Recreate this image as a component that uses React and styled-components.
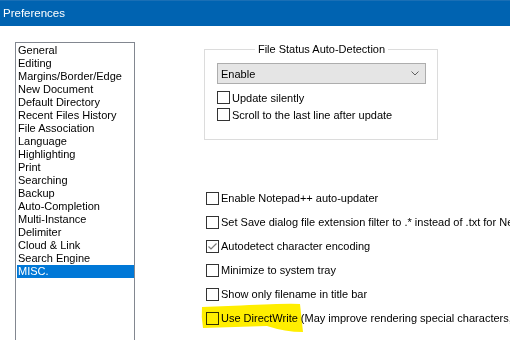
import React from "react";
import styled, { createGlobalStyle } from "styled-components";

const GlobalStyle = createGlobalStyle`
  html, body {
    margin: 0;
    padding: 0;
    background: #ffffff;
  }
  body {
    width: 510px;
    height: 340px;
    overflow: hidden;
    font-family: "Liberation Sans", Arial, sans-serif;
    font-size: 11px;
    color: #000000;
  }
`;

const pages = [
  "General",
  "Editing",
  "Margins/Border/Edge",
  "New Document",
  "Default Directory",
  "Recent Files History",
  "File Association",
  "Language",
  "Highlighting",
  "Print",
  "Searching",
  "Backup",
  "Auto-Completion",
  "Multi-Instance",
  "Delimiter",
  "Cloud & Link",
  "Search Engine",
  "MISC.",
];

const options = [
  { label: "Enable Notepad++ auto-updater", checked: false },
  { label: "Set Save dialog file extension filter to .* instead of .txt for New document", checked: false },
  { label: "Autodetect character encoding", checked: true },
  { label: "Minimize to system tray", checked: false },
  { label: "Show only filename in title bar", checked: false },
  { label: "Use DirectWrite (May improve rendering special characters, need to restart Notepad++)", checked: false, marked: true },
];

const Window = styled.div`
  width: 510px;
  height: 340px;
  display: flex;
  flex-direction: column;
  overflow: hidden;
`;

const TitleBar = styled.div`
  height: 26px;
  flex-shrink: 0;
  background: #0063b1;
  border-top: 1px solid #1a6fb5;
  box-sizing: border-box;
  display: flex;
  align-items: center;
  padding-left: 3px;
  padding-bottom: 2px;
  color: #ffffff;
  font-size: 11.5px;
`;

const Body = styled.div`
  flex: 1;
  display: flex;
  padding: 16px 0 0 15px;
  min-height: 0;
  overflow: hidden;
`;

const ListBox = styled.ul`
  list-style: none;
  margin: 0;
  padding: 1px 0 0 1px;
  width: 120px;
  box-sizing: border-box;
  border: 1px solid #828790;
  border-bottom: none;
  flex-shrink: 0;
`;

const ListItem = styled.li`
  height: 13px;
  line-height: 13px;
  padding-left: 1px;
  white-space: nowrap;
  background: ${(p) => (p.$selected ? "#0078d7" : "transparent")};
  color: ${(p) => (p.$selected ? "#ffffff" : "#000000")};
`;

const Panel = styled.div`
  flex: 1;
  display: flex;
  flex-direction: column;
  padding-left: 69px;
  min-width: 0;
  overflow: hidden;
`;

const Group = styled.fieldset`
  width: 234px;
  height: 97px;
  box-sizing: border-box;
  margin: 1px 0 0 0;
  padding: 7px 11px 0 12px;
  border: 1px solid #dcdcdc;
  min-width: 0;
  flex-shrink: 0;
`;

const Legend = styled.legend`
  margin: 0 auto;
  padding: 0 3px;
  line-height: 13px;
`;

const Combo = styled.div`
  height: 21px;
  box-sizing: border-box;
  border: 1px solid #adadad;
  background: #e5e5e5;
  display: flex;
  align-items: center;
  justify-content: space-between;
  padding: 0 6px 0 3px;
  margin-bottom: 5px;
`;

const CheckRow = styled.div`
  position: relative;
  display: flex;
  align-items: center;
  gap: 2px;
  height: ${(p) => p.$height || 17}px;
  white-space: nowrap;
  flex-shrink: 0;
`;

const Label = styled.span`
  position: relative;
`;

const Box = styled.span`
  width: 13px;
  height: 13px;
  box-sizing: border-box;
  border: 1px solid #333333;
  background: #ffffff;
  flex-shrink: 0;
  display: flex;
`;

const Options = styled.div`
  display: flex;
  flex-direction: column;
  margin-top: 46px;
  margin-left: 2px;
`;

const Marker = styled.svg`
  position: absolute;
  left: -5px;
  top: -3px;
  mix-blend-mode: multiply;
  pointer-events: none;
`;

const Check = ({ checked }) => (
  <Box>
    {checked && (
      <svg width="11" height="11" viewBox="0 0 11 11">
        <path d="M1.5 5.5 L4 8 L9.5 2.5" fill="none" stroke="#7a7a7a" strokeWidth="1.2" />
      </svg>
    )}
  </Box>
);

const Chevron = () => (
  <svg width="8" height="5" viewBox="0 0 8 5">
    <path d="M0.5 0.5 L4 4 L7.5 0.5" fill="none" stroke="#606060" strokeWidth="1" />
  </svg>
);

const Highlight = () => (
  <Marker width="112" height="34" viewBox="0 0 112 34">
    <path
      d="M1 4 L40 2.5 Q88 0 99 1 L102 29 Q84 29 66 23 L2 25 Q0 14 1 4 Z"
      fill="#ffee00"
    />
  </Marker>
);

export default function App() {
  return (
    <>
      <GlobalStyle />
      <Window>
        <TitleBar>Preferences</TitleBar>
        <Body>
          <ListBox>
            {pages.map((p) => (
              <ListItem key={p} $selected={p === "MISC."}>
                {p}
              </ListItem>
            ))}
          </ListBox>
          <Panel>
            <Group>
              <Legend>File Status Auto-Detection</Legend>
              <Combo>
                <span>Enable</span>
                <Chevron />
              </Combo>
              <CheckRow>
                <Check />
                <Label>Update silently</Label>
              </CheckRow>
              <CheckRow>
                <Check />
                <Label>Scroll to the last line after update</Label>
              </CheckRow>
            </Group>
            <Options>
              {options.map((o) => (
                <CheckRow key={o.label} $height={24}>
                  {o.marked && <Highlight />}
                  <Check checked={o.checked} />
                  <Label>{o.label}</Label>
                </CheckRow>
              ))}
            </Options>
          </Panel>
        </Body>
      </Window>
    </>
  );
}
